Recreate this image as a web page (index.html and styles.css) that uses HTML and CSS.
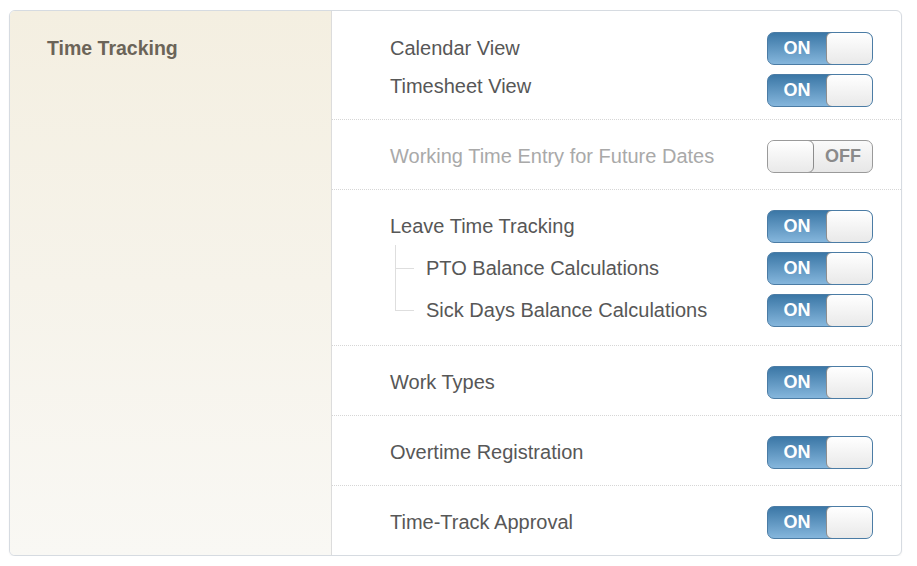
FILE: index.html
```html
<!DOCTYPE html>
<html>
<head>
<meta charset="utf-8">
<link rel="stylesheet" href="styles.css">
</head>
<body>
<div class="card">
  <div class="side">
    <div class="side-title">Time Tracking</div>
  </div>
  <div class="main">
    <div class="group first">
      <div class="row"><span class="label">Calendar View</span><div class="toggle on"><span class="tt">ON</span><span class="knob"></span></div></div>
      <div class="row"><span class="label up">Timesheet View</span><div class="toggle on"><span class="tt">ON</span><span class="knob"></span></div></div>
    </div>
    <div class="group">
      <div class="row"><span class="label muted">Working Time Entry for Future Dates</span><div class="toggle off"><span class="knob"></span><span class="tt">OFF</span></div></div>
    </div>
    <div class="group tree-group">
      <div class="row"><span class="label">Leave Time Tracking</span><div class="toggle on"><span class="tt">ON</span><span class="knob"></span></div></div>
      <div class="subtree">
        <div class="row sub"><span class="branch"></span><span class="label">PTO Balance Calculations</span><div class="toggle on"><span class="tt">ON</span><span class="knob"></span></div></div>
        <div class="row sub"><span class="branch"></span><span class="label">Sick Days Balance Calculations</span><div class="toggle on"><span class="tt">ON</span><span class="knob"></span></div></div>
      </div>
    </div>
    <div class="group">
      <div class="row"><span class="label">Work Types</span><div class="toggle on"><span class="tt">ON</span><span class="knob"></span></div></div>
    </div>
    <div class="group">
      <div class="row"><span class="label">Overtime Registration</span><div class="toggle on"><span class="tt">ON</span><span class="knob"></span></div></div>
    </div>
    <div class="group last">
      <div class="row"><span class="label">Time-Track Approval</span><div class="toggle on"><span class="tt">ON</span><span class="knob"></span></div></div>
    </div>
  </div>
</div>
</body>
</html>
```

FILE: styles.css
```css
html, body {
  margin: 0;
  padding: 0;
  background: #ffffff;
}
body {
  font-family: "Liberation Sans", Arial, sans-serif;
}
.card {
  margin: 10px 0 0 9px;
  width: 891px;
  display: flex;
  border: 1px solid #d6dbe1;
  border-radius: 6px;
  background: #fff;
  box-shadow: 0 1px 2px rgba(0,0,0,0.06);
  overflow: hidden;
}
.side {
  width: 322px;
  flex: none;
  border-right: 1px solid #dcdcdc;
  background: linear-gradient(#f4efe1 0%, #f6f3ea 50%, #f9f8f4 100%);
  padding: 26px 0 0 37px;
  box-sizing: border-box;
}
.side-title {
  font-weight: bold;
  font-size: 19.5px;
  line-height: 22px;
  color: #6b6458;
}
.main {
  flex: 1;
  display: flex;
  flex-direction: column;
}
.group {
  padding: 15px 28px 12px 58px;
  border-bottom: 1px dotted #d6d6d6;
}
.group.first {
  padding-top: 16px;
  padding-bottom: 8px;
}
.group.tree-group {
  padding-bottom: 14px;
}
.group.last {
  border-bottom: none;
}
.row {
  height: 42px;
  display: flex;
  align-items: center;
}
.label {
  flex: 1;
  font-size: 20px;
  color: #575757;
  line-height: 22px;
}
.label.up {
  position: relative;
  top: -4px;
}
.label.muted {
  color: #a9a9a9;
}
.subtree {
  position: relative;
}
.subtree::before {
  content: "";
  position: absolute;
  left: 5px;
  top: -2px;
  height: 66px;
  border-left: 1px solid #dedede;
}
.row.sub .branch {
  width: 19px;
  margin-left: 5px;
  margin-right: 12px;
  border-top: 1px solid #dedede;
  align-self: center;
}
.toggle {
  width: 106px;
  height: 33px;
  box-sizing: border-box;
  border-radius: 7px;
  display: flex;
  align-items: stretch;
  flex: none;
  overflow: hidden;
}
.toggle.on {
  border: 1px solid #4b7ca5;
  background: linear-gradient(#3b77a6, #85b6dc);
}
.toggle.off {
  border: 1px solid #9a9a9a;
  background: linear-gradient(#fafafa, #e7e7e7);
}
.tt {
  flex: 1;
  display: flex;
  align-items: center;
  justify-content: center;
  font-weight: bold;
  font-size: 18px;
  padding-top: 1px;
}
.toggle.on .tt {
  color: #ffffff;
}
.toggle.off .tt {
  color: #8a8a8a;
}
.knob {
  width: 47px;
  box-sizing: border-box;
  border: 1px solid #8d8d8d;
  border-radius: 6px;
  background: linear-gradient(#ffffff, #e9e9e9);
  margin: -1px -1px -1px 0;
}
.toggle.off .knob {
  margin: -1px 0 -1px -1px;
}
```
